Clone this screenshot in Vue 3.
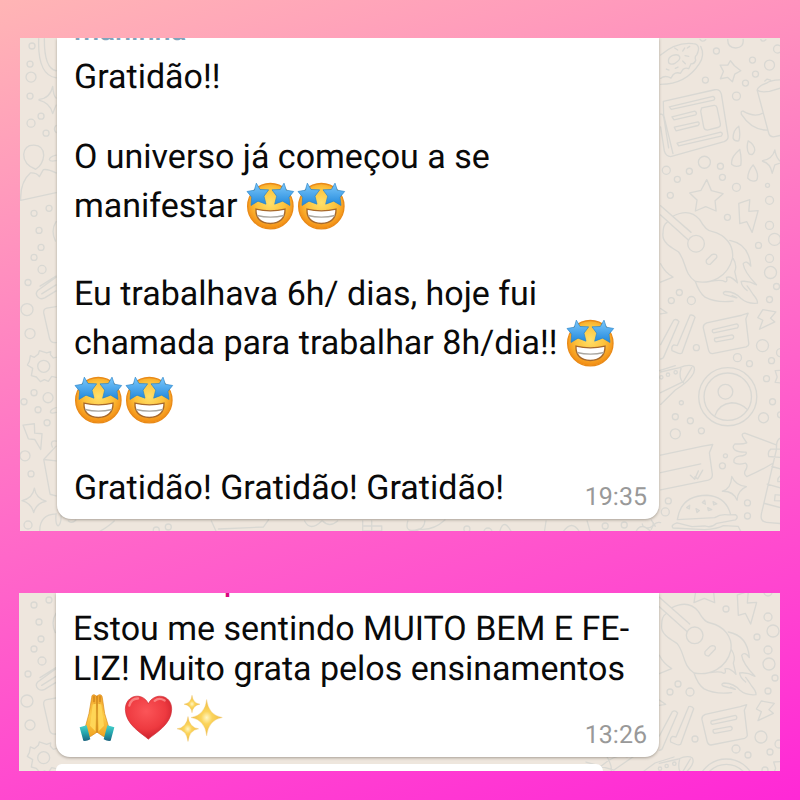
<script setup>
const messages = [
  {
    id: 'first',
    author: 'maninha',
    time: '19:35',
    view: '20 38 760 492',
    lines: [
      { text: 'Gratidão!!' },
      {},
      { text: 'O universo já começou a se' },
      { text: 'manifestar ', emoji: ['star', 'star'] },
      {},
      { text: 'Eu trabalhava 6h/ dias, hoje fui' },
      { text: 'chamada para trabalhar 8h/dia!! ', emoji: ['star'] },
      { emoji: ['star', 'star'] },
      {},
      { text: 'Gratidão! Gratidão! Gratidão!' }
    ]
  },
  {
    id: 'second',
    author: 'p',
    time: '13:26',
    view: '19 201 761 178',
    next: true,
    lines: [
      { text: 'Estou me sentindo MUITO BEM E FE-' },
      { text: 'LIZ! Muito grata pelos ensinamentos' },
      { emoji: ['hands', 'heart', 'sparkles'] }
    ]
  }
]

const emoji = {
  star: { view: '12 21 153 168', label: 'star-struck' },
  hands: { view: '38 24 153 168', label: 'folded hands' },
  heart: { view: '189 24 153 168', label: 'red heart' },
  sparkles: { view: '340 24 153 168', label: 'sparkles' }
}

// Bubbles of the wallpaper: x, y, radius
const dots = [
  [32, 46, 3], [30, 64, 3], [31, 77, 5], [30, 96, 3], [31, 123, 4], [41, 116, 3], [46, 133, 3],
  [34, 213, 3], [49, 208, 3], [39, 230, 3], [41, 247, 3], [34, 257, 3], [42, 269, 4], [28, 282, 3],
  [27, 309, 6], [30, 333, 5], [34, 392, 3], [24, 401, 3], [48, 397, 5], [38, 409, 3], [47, 422, 3],
  [25, 455, 5], [31, 473, 3], [28, 524, 4],
  [715, 51, 3], [704, 80, 3], [776, 49, 4], [751, 60, 3], [768, 65, 5], [754, 74, 3], [744, 83, 3],
  [735, 96, 4], [703, 162, 6], [719, 166, 3], [688, 171, 3], [665, 170, 4], [676, 179, 3], [721, 177, 3],
  [669, 195, 3], [735, 187, 4], [766, 185, 2], [768, 200, 4], [726, 217, 3], [768, 225, 4],
  [773, 239, 6], [757, 245, 3], [768, 258, 4], [769, 272, 6], [775, 286, 3], [768, 299, 3],
  [678, 292, 3], [670, 300, 3], [690, 300, 4], [695, 347, 3], [761, 345, 6], [736, 357, 4],
  [748, 363, 3], [770, 360, 3], [765, 378, 3], [771, 401, 3], [762, 417, 5], [779, 352, 4],
  [779, 414, 3], [680, 402, 2], [674, 416, 3], [689, 420, 3], [674, 433, 5], [700, 430, 3],
  [724, 455, 2], [721, 465, 3], [667, 500, 3], [664, 511, 4], [746, 502, 3], [746, 515, 3],
  [156, 529, 3], [168, 526, 3], [466, 528, 3], [604, 525, 3], [623, 524, 3], [487, 531, 4]
]
</script>

<template>
  <main class="page">
    <svg class="sprite" aria-hidden="true">
      <defs>
        <radialGradient id="face" cx=".5" cy=".42" r=".58">
          <stop offset="0" stop-color="#ffe06a" />
          <stop offset=".55" stop-color="#fdc23b" />
          <stop offset="1" stop-color="#f28a12" />
        </radialGradient>
        <linearGradient id="blue" x1="0" y1="0" x2="0" y2="1">
          <stop offset="0" stop-color="#7cc8fb" />
          <stop offset="1" stop-color="#2188dc" />
        </linearGradient>
        <radialGradient id="red" cx=".45" cy=".35" r=".7">
          <stop offset="0" stop-color="#fb5558" />
          <stop offset=".6" stop-color="#ee3a40" />
          <stop offset="1" stop-color="#c41c28" />
        </radialGradient>
        <linearGradient id="skin" x1="0" y1="0" x2="0" y2="1">
          <stop offset="0" stop-color="#f3a42a" />
          <stop offset=".5" stop-color="#fccb48" />
          <stop offset="1" stop-color="#f0a01e" />
        </linearGradient>
        <linearGradient id="teal" x1="0" y1="0" x2="0" y2="1">
          <stop offset="0" stop-color="#48d2cc" />
          <stop offset=".5" stop-color="#25a5ad" />
          <stop offset="1" stop-color="#1c6580" />
        </linearGradient>
        <radialGradient id="gold">
          <stop offset="0" stop-color="#fff6c4" />
          <stop offset=".35" stop-color="#fbd45b" />
          <stop offset="1" stop-color="#efbb43" />
        </radialGradient>

        <g id="star">
          <circle cx="85" cy="107" r="68" fill="url(#face)" stroke="#e98a17" stroke-width="4" />
          <path d="M42 116Q85 126 129 116Q130 156 85 159Q40 156 42 116Z" fill="#fff" stroke="#a8692c" stroke-width="4" />
          <path d="M45 135Q85 145 126 135" fill="none" stroke="#a9a6a0" stroke-width="4" />
          <g fill="url(#blue)" stroke="#2382ca" stroke-width="2" stroke-linejoin="round">
            <path d="M43 38L54 57L80 58L66 77L72 101L48 92L27 105L29 80L15 63L37 59Z" />
            <path d="M126 38L133 59L155 63L141 80L144 105L122 92L98 101L104 77L90 58L115 57Z" />
          </g>
        </g>

        <g id="hands">
          <path d="M94 49Q94 38 102 40L109 44L116 40Q125 38 126 49L133 96L144 133L157 143L146 171L128 164L110 152L92 164L73 171L62 143L76 133L86 96Z" fill="url(#skin)" stroke="#d88a18" stroke-width="2" />
          <path d="M110 43V153M101 44V62M119 44V62M104 66L95 133M116 66L125 133" fill="none" stroke="#bd7413" stroke-width="3" />
          <path d="M97 69L89 133L105 149L107 66ZM123 69L131 133L115 149L113 66Z" fill="#ffd657" />
          <path d="M58 137L79 131L90 173Q79 180 69 178ZM162 137L141 131L130 173Q141 180 151 178Z" fill="url(#teal)" />
        </g>

        <g id="heart">
          <path d="M262 173C242 155 194 130 193 84C193 38 247 31 262 67C279 31 333 38 332 84C331 130 282 155 262 173Z" fill="url(#red)" stroke="#cd2d35" stroke-width="2" />
          <path d="M205 72Q211 50 231 51M281 58Q294 47 311 57" fill="none" stroke="#ffa3a0" stroke-width="7" stroke-linecap="round" opacity=".65" />
        </g>

        <g id="sparkles" fill="url(#gold)" stroke="#ecc36b" stroke-width="1">
          <path d="M435 54Q440 101 482 108Q440 115 435 163Q430 115 388 108Q430 101 435 54Z" />
          <path d="M391 41Q394 65 415 68Q394 71 391 94Q388 71 367 68Q388 65 391 41Z" />
          <path d="M379 105Q383 138 411 142Q383 146 379 180Q375 146 346 142Q375 138 379 105Z" />
        </g>

        <g id="doodles">
          <circle v-for="(d, i) in dots" :key="i" :cx="d[0]" :cy="d[1]" :r="d[2]" />
          <g transform="scale(.3333)" stroke-width="4">
            <path d="M116 116Q112 225 168 233M133 116Q132 205 168 212M117 298Q150 295 158 259Q160 287 168 294M117 300Q150 308 158 340L168 315M168 376Q158 387 168 397M168 465Q148 470 148 478Q150 485 168 481" />
            <path d="M107 507C88 500 71 485 71 463Q74 434 102 435Q130 436 131 465Q129 493 107 507M62 600Q60 545 91 518Q110 517 118 529L130 508Q145 506 168 518M62 600L168 577M168 664Q151 690 166 722" />
          </g>
          <g transform="translate(0 240) scale(.3333)" stroke-width="4">
            <path d="M168 110L113 150Q104 160 114 170Q120 178 134 172L168 151M120 137L168 107M125 160L168 133M168 198L140 203Q130 205 131 217L148 292Q151 308 168 306" />
            <path d="M168 350L160 352L151 342L152 333L140 337L118 330L115 340L103 350L91 345L88 362L82 373L98 383L94 405L109 409L121 423L133 417L145 422L155 407L168 410M168 501Q151 506 151 514Q153 520 168 515" />
            <circle cx="131" cy="377" r="18" />
            <path d="M69 553L103 549L104 577L126 579L122 626L104 596L85 594ZM66 779Q98 773 103 742Q108 773 138 781Q108 787 101 815Q94 787 66 779M168 601Q154 598 154 610L157 619M168 616L131 656L150 760L168 765M131 656L168 660M168 819Q119 821 119 870M168 818Q165 850 174 855Q184 850 183 820M205 840Q216 849 227 838" />
          </g>
          <g transform="translate(650 30) scale(.3333)" stroke-width="4">
            <path d="M28 75Q75 35 125 41Q151 43 136 75Q129 79 133 91Q128 103 119 101L112 116Q104 112 95 118L87 130Q76 125 66 133L59 144Q41 134 28 145M148 49Q161 75 144 101Q104 163 28 163M52 98Q48 83 64 76Q81 71 85 80Q88 89 72 99Q59 106 52 98M70 54L79 60M94 63L100 54M101 77L112 79M94 93L102 101M72 115L80 111M45 117L53 120M108 54L115 49" />
            <path d="M146 28Q152 38 163 29M229 28Q228 53 253 54Q278 53 275 28M328 29Q333 38 343 29M237 92L249 107L268 122L250 132L243 155L229 142L207 146L216 124L206 105L229 105Z" />
            <path d="M36 214L190 179Q206 176 210 193L230 318Q231 329 218 334L58 379Q44 379 39 362L28 290M36 214L37 254L65 370M28 252Q36 250 38 265L52 353" />
            <path d="M54 230L185 199Q194 204 187 210L60 238ZM62 260L130 243Q139 248 133 254L68 269ZM69 291L140 275Q147 280 140 286L74 302ZM77 339L208 306Q217 310 209 318L82 347ZM151 233L188 226Q195 225 197 233L207 281Q208 290 199 292L168 300Q159 300 157 291L148 243Z" />
            <path d="M390 149Q356 150 347 158Q320 168 317 180Q326 188 354 184L390 173M317 180L351 307Q354 320 366 320L390 315M340 153L347 147L357 150M334 249Q309 263 275 243Q267 242 270 253Q300 300 347 300" />
            <path d="M262 288Q244 301 245 324Q249 334 262 332Q268 315 262 288M290 332Q283 356 293 371Q306 378 310 360Q309 342 290 332M265 358Q236 382 241 403Q253 413 268 405Q271 383 265 358M305 404Q289 422 289 444Q300 457 315 450Q325 434 305 404M333 391Q363 387 370 359Q374 386 390 396M333 393Q357 399 362 429L370 404L390 397" />
            <path d="M166 448L180 481L215 490L191 511L194 542L163 529L132 542L137 509L115 488L149 480ZM262 519L295 508L292 543L320 541L302 606L286 574L265 580Z" />
            <path d="M66 557Q115 532 145 568Q164 602 181 603C223 613 248 645 243 684C229 740 179 762 132 753C97 730 105 692 81 664C61 652 31 636 35 610Q35 583 47 576M28 526L119 606M28 554L110 628M235 630Q293 641 298 707Q284 687 275 700Q278 724 315 763Q292 750 269 753Q270 767 287 780M245 684Q258 705 250 724L258 757Q238 735 225 741Q229 753 222 754Q210 747 181 752M132 753Q143 786 161 800Q195 818 245 812M28 700Q40 725 65 740L28 755M181 673L165 689Q162 702 176 702L196 681Q198 671 187 671Z" />
            <circle cx="134" cy="640" r="25" />
          </g>
          <g transform="translate(650 280) scale(.3333)" stroke-width="4">
            <path d="M242 45Q268 56 247 50L219 42Q211 36 222 33Q252 34 270 55Q288 71 318 68Q319 58 305 42Q295 26 287 16M28 84L47 97L28 100M28 192L67 119Q75 113 83 123L39 225Q37 234 28 235M116 104Q126 101 131 110L92 217Q87 221 76 216L62 210Q59 198 68 193L78 195Z" />
            <path d="M166 127L271 104L290 98L283 115L292 190Q292 196 284 199L183 219Q174 219 171 207L156 143Q154 132 166 127M184 147L256 130Q264 134 258 142L187 157Q180 154 184 147M190 173L242 163Q251 168 243 175L194 184Q187 181 190 173M334 87L373 94L357 113L370 124L324 146L334 119L319 111Z" />
            <path d="M28 274L85 261Q114 249 127 258Q134 270 120 288Q102 310 72 328L28 371M28 336L96 303L121 261M89 263Q81 292 96 306M390 269L371 270L377 289L371 305L390 307" />
            <circle cx="50" cy="282" r="5" /><circle cx="73" cy="275" r="5" /><circle cx="30" cy="290" r="5" />
            <circle cx="229" cy="348" r="87" /><circle cx="229" cy="348" r="71" /><circle cx="222" cy="333" r="22" />
            <path d="M191 404Q202 370 241 366Q269 367 287 386M28 523L155 496L184 491L174 516L183 582Q183 594 171 598L28 627M28 575L148 549M117 583L130 595L141 570M130 588L139 594L154 568" />
            <path d="M374 492L280 457Q267 458 276 471L286 486Q273 491 251 489Q239 499 251 508Q262 515 284 514Q288 524 263 526Q244 530 248 545Q257 553 282 547Q292 553 281 570Q276 582 286 587Q321 573 363 548M390 471Q373 474 375 505L331 693Q323 722 345 724L390 728M390 505H358Q347 513 352 527L390 530M361 557L390 565M347 610L390 622M337 667L390 681M390 583Q377 590 379 602H390M371 641L369 659L390 660M371 641L390 643" />
            <path d="M78 716Q89 643 167 643Q223 647 237 699M78 716L190 710Q209 698 230 702L252 701Q263 708 252 717L196 727Q180 742 160 735L122 737L77 726Q57 732 65 741L160 746Q198 744 216 734L260 736L270 755M106 680L115 673L114 684ZM134 683L144 689L137 695ZM153 665L160 658L162 670ZM169 680L181 686L171 689ZM185 662L196 669L187 672Z" />
            <path d="M213 631Q239 624 241 587Q253 615 285 617Q258 628 257 658Q246 630 213 631M0 745Q10 720 28 725M0 717L12 736" />
          </g>
          <path d="M95 533Q108 526 114 520M216 531L211 520M218 528L263 526L268 519M304 520Q310 531 321 520M322 520Q329 527 337 520M362 520V535M371 520V535M362 525H381V530H362M407 520Q403 533 418 528Q432 530 444 519M424 520Q424 528 414 530M498 534Q502 513 512 534M545 520L543 533M586 520L590 534M560 534Q571 515 580 534M635 530Q640 521 649 530M641 523A5 4 0 1 0 652 522" />
          <path d="M586 370L614 378L640 360M596 379Q615 360 627 365M604 360Q613 373 611 380M644 379L655 371L674 365" />
        </g>
      </defs>
    </svg>

    <section v-for="m in messages" :key="m.id" class="chat" :class="m.id">
      <svg class="wallpaper" :viewBox="m.view" preserveAspectRatio="xMinYMin slice" aria-hidden="true">
        <use href="#doodles" />
      </svg>
      <article class="bubble">
        <p class="author">{{ m.author }}</p>
        <div class="body">
          <p v-for="(line, i) in m.lines" :key="i" class="line">
            <span v-if="line.text">{{ line.text }}</span>
            <svg v-for="(e, k) in line.emoji" :key="k" class="emoji" :viewBox="emoji[e].view" role="img" :aria-label="emoji[e].label">
              <use :href="'#' + e" />
            </svg>
          </p>
        </div>
        <time class="time">{{ m.time }}</time>
      </article>
      <div v-if="m.next" class="next"></div>
    </section>
  </main>
</template>

<style>
body {
  margin: 0;
}
</style>

<style scoped>
.page {
  box-sizing: border-box;
  min-height: 100vh;
  padding: 38px 20px 29px;
  display: flex;
  flex-direction: column;
  gap: 62px;
  background: linear-gradient(163deg, #ffb5b5 0%, #ff6cc8 50%, #ff28d6 100%);
  font-family: Roboto, "Liberation Sans", sans-serif;
  text-rendering: geometricPrecision;
  color: #0a0a0a;
}
.sprite {
  position: absolute;
  width: 0;
  height: 0;
}
.chat {
  position: relative;
  overflow: hidden;
  background: #eee6dd;
}
.second {
  margin-left: -1px;
}
.wallpaper {
  position: absolute;
  inset: 0;
  width: 100%;
  height: 100%;
  fill: none;
  stroke: #d9d8d3;
  stroke-width: 1.3;
  stroke-linejoin: round;
  stroke-linecap: round;
}
.bubble {
  position: relative;
  margin: 0 121px 12px 37px;
  padding: 0 12px 11px 17px;
  display: flow-root;
  background: #fff;
  border-radius: 0 0 14px 14px;
  box-shadow: 0 1px 3px rgba(80, 70, 60, 0.45);
}
.author {
  margin: -23px 0 10px;
  font-size: 29px;
  line-height: 32px;
  font-weight: 500;
  color: #7fa5bb;
}
.second .author {
  margin: -27px 0 11px;
  padding-left: 151px;
  color: #d8087c;
}
.line {
  display: flex;
  align-items: center;
  min-height: 40px;
  margin: 0;
  font-size: 34px;
  line-height: 40px;
  white-space: pre;
}
.emoji {
  flex: none;
  width: 51px;
  height: 57px;
}
.time {
  position: absolute;
  right: 12px;
  bottom: 6px;
  font-size: 25px;
  line-height: 30px;
  color: #999;
}
.second .bubble {
  margin-bottom: 7px;
}
.next {
  position: relative;
  height: 7px;
  margin: 0 177px 0 37px;
  background: #fff;
  border-radius: 10px 12px 0 0;
}
</style>
